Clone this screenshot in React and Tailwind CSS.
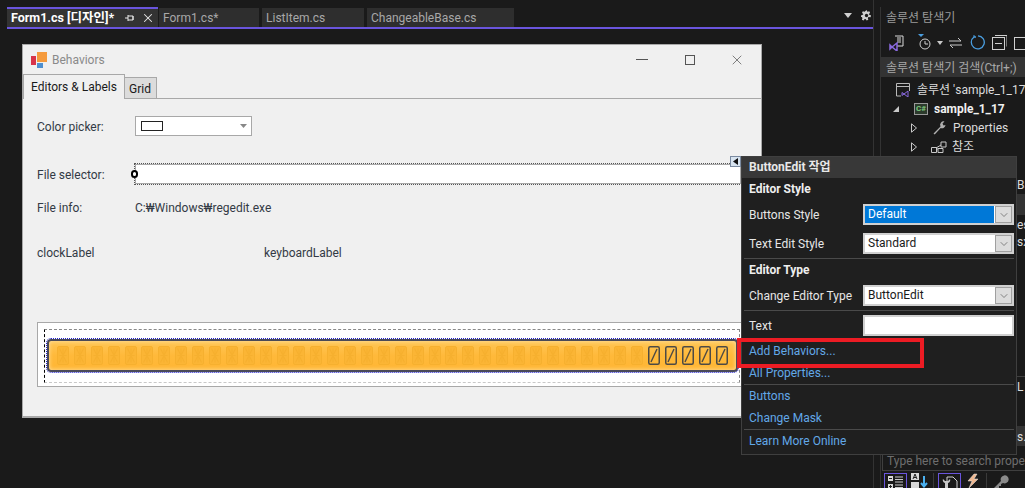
import { ChevronDown, X } from 'lucide-react';

const DocTab = ({ label, width }) => (
  <div className={`${width} h-[19px] mr-[3px] bg-[#2e2e2e] text-[#a8a8a8] text-[12px] leading-[20px] pl-[4px]`}>{label}</div>
);

const Combo = ({ value, selected }) => (
  <div className="w-[151px] h-[21px] bg-white border-2 border-[#d0d0d0] flex items-center">
    <div className={`flex-1 h-full pl-[3px] text-[12px] leading-[16px] ${selected ? 'bg-[#0078d7] text-white' : 'text-[#1a1a1a]'}`}>{value}</div>
    <div className="w-[17px] h-full ml-[1px] bg-[#dcdcdc] border border-[#a0a0a0] flex items-center justify-center">
      <ChevronDown size={12} strokeWidth={1.2} className="text-[#444]" />
    </div>
  </div>
);

const Divider = () => <div className="h-px mx-[2px] bg-[#4a4a4a] w-[270px]" />;

const FieldRow = ({ label, children }) => (
  <div className="h-[29px] flex items-center justify-between pl-[7px] pr-[2px] w-[274px] text-[12px] text-[#e6e6e6]">
    <span>{label}</span>
    {children}
  </div>
);

const Section = ({ label }) => (
  <div className="h-[22px] pl-[7px] text-[12px] leading-[22px] font-bold text-[#eeeeee]">{label}</div>
);

const LinkRow = ({ label }) => (
  <div className="h-[22px] pl-[7px] text-[12px] leading-[22px] text-[#62a8e8]">{label}</div>
);

// 14 segment cell of the LCD, dim when unlit
const DimCell = () => (
  <svg width="12" height="19" viewBox="0 0 12 19" className="shrink-0">
    <rect x="0.5" y="0.5" width="11" height="18" rx="1.5" fill="#fbb535" stroke="#f6b02f" />
    <path d="M2.500 2.500l7 14M9.500 2.500l-7 14M6 2.500v14M2.500 9.500h7" stroke="#f6b02f" strokeWidth="1.100" />
  </svg>
);

const DarkCell = () => (
  <svg width="12" height="19" viewBox="0 0 12 19" className="shrink-0">
    <rect x="0.75" y="0.75" width="10.5" height="17.5" rx="1.5" fill="none" stroke="#4d4a45" strokeWidth="1.5" />
    <path d="M9 3L3 16" stroke="#4d4a45" strokeWidth="1.400" />
  </svg>
);

const TreeRow = ({ pad, children, className = '' }) => (
  <div className={`h-[19px] flex items-center whitespace-nowrap text-[12px] text-[#dcdcdc] ${pad} ${className}`}>{children}</div>
);

const Expander = () => (
  <svg width="6" height="10" viewBox="0 0 6 10"><path d="M.5.8l5 4.200-5 4.200z" fill="none" stroke="#c8c8c8" /></svg>
);

const App = () => {
  return (
    <div
      className="relative w-[1025px] h-[488px] overflow-hidden bg-[#1a1a1a] flex"
      style={{ fontFamily: 'Roboto, "Noto Sans CJK KR", sans-serif' }}
    >
      {/* Document area */}
      <div className="w-[874px] h-full pl-[7px] flex flex-col border-r border-[#333333] shrink-0">
        <div className="h-[22px] mt-[7px] flex items-start relative">
          <div className="w-[151px] h-[20px] mr-px border-t-2 border-[#6a55dd] bg-[#333333] flex items-center pl-[4px] text-[12.5px] font-bold text-white">
            <span className="whitespace-nowrap w-[113px]">Form1.cs [디자인]*</span>
            <svg width="10" height="10" viewBox="0 0 10 10" className="ml-px shrink-0">
              <path d="M0 5h3M3 2v6M3 3h5v4H3M8 3v4" fill="none" stroke="#e8e8e8" />
            </svg>
            <X size={14} strokeWidth={1.8} className="ml-[6px] text-[#e8e8e8] shrink-0" />
          </div>
          <div className="mt-px flex">
            <DocTab label="Form1.cs*" width="w-[100px]" />
            <DocTab label="ListItem.cs" width="w-[102px]" />
            <DocTab label="ChangeableBase.cs" width="w-[147px]" />
          </div>
          <div className="ml-auto flex items-center gap-[9px] mt-[3px] pr-[1px]">
            <svg width="8" height="5" viewBox="0 0 8 5"><path d="M0 0h8L4 5z" fill="#d0d0d0" /></svg>
            <svg width="11" height="11" viewBox="0 0 12 12">
              <path d="M6 0l1 2 2-.6.9 1.700-1.400 1.400.1.500 2.400 1-.6 1.800-2.200-.2-.8 1 .6 2-1.800.8-1.200-1.700h-1l-1.200 1.700-1.800-.8.6-2-.8-1-2.200.2L0 6l2.400-1 .1-.5L1.100 3.100 2 1.400l2 .6z" fill="#d0d0d0" />
              <circle cx="6" cy="6" r="1.800" fill="#1a1a1a" />
            </svg>
          </div>
          <div className="absolute left-0 right-0 top-[20px] h-[2px] bg-[#6a55dd]" />
        </div>

        {/* Designer surface with the form */}
        <div className="pl-[15px] pt-[15px]">
          <div className="w-[740px] h-[374px] bg-[#f0f0f0] border border-b-2 border-[#a8a8a8] flex flex-col">
            <div className="h-[29px] flex items-center pl-[8px] shrink-0">
              <svg width="16" height="16" viewBox="0 0 16 16" className="mr-[5px]">
                <rect x="0" y="4" width="5" height="9" fill="#d7344a" />
                <rect x="6" y="0" width="10" height="10" fill="#f59a3c" />
                <rect x="6" y="11" width="6" height="5" fill="#4f8fce" />
              </svg>
              <span className="text-[12px] leading-[18px] pt-px text-[#8a8a8a]">Behaviors</span>
              <div className="ml-auto flex items-center pr-[16px]">
                <div className="w-[12px] h-px bg-[#555]" />
                <div className="w-[10px] h-[10px] ml-[37px] border border-[#555]" />
                <X size={16} strokeWidth={1} className="ml-[34px] text-[#444]" />
              </div>
            </div>

            {/* Tabs */}
            <div className="h-[25px] flex items-end relative shrink-0">
              <div className="w-[102px] h-[25px] border border-b-0 border-[#a8a8a8] bg-[#f0f0f0] z-10 text-[12px] leading-[25px] pl-[7px] text-[#1a1a1a]">Editors &amp; Labels</div>
              <div className="w-[32px] h-[22px] border-r border-t border-[#a8a8a8] bg-[#dcdcdc] text-[12px] leading-[22px] pl-[4px] text-[#1a1a1a]">Grid</div>
              <div className="absolute left-0 right-0 bottom-0 h-px bg-[#a8a8a8]" />
            </div>

            <div className="flex-1 pl-[14px] text-[12px] text-[#333a45]">
              <div className="flex items-center h-[20px] mt-[17px]">
                <span className="w-[98px] pt-px">Color picker:</span>
                <div className="w-[117px] h-[20px] bg-white border border-[#a8a8a8] flex items-center pl-[5px]">
                  <div className="w-[22px] h-[10px] border border-[#222]" />
                  <svg width="7" height="4" viewBox="0 0 7 4" className="ml-auto mr-[4px]"><path d="M0 0h7L3.500 4z" fill="#888" /></svg>
                </div>
              </div>
              <div className="flex items-center h-[20px] mt-[28px]">
                <span className="w-[98px] pt-px">File selector:</span>
                <div className="relative w-[606px] h-[20px] bg-white border border-[#a8a8a8] outline-1 outline-dotted outline-[#555]">
                  <div className="absolute -left-[5px] top-[5px] w-[7px] h-[8px] rounded-full bg-white border-2 border-black" />
                </div>
              </div>
              <div className="flex items-center h-[20px] mt-[13px] pt-px">
                <span className="w-[98px]">File info:</span>
                <span>C:₩Windows₩regedit.exe</span>
              </div>
              <div className="flex items-center h-[20px] mt-[26px]">
                <span className="w-[227px]">clockLabel</span>
                <span>keyboardLabel</span>
              </div>

              {/* Panel with the LCD */}
              <div className="w-[710px] h-[65px] mt-[59px] bg-white border border-[#a8a8a8] pl-[6px] pt-[6px]">
                <div className="w-[696px] h-[54px] border border-dashed border-t-[#888888] border-l-black border-r-[#888888] border-b-[#c8c8c8] pl-[2px] pt-[9px]">
                  <div className="w-[691px] h-[33px] rounded-[4px] border-2 border-[#4a4a58] bg-gradient-to-b from-[#ffc655] via-[#ffb93a] to-[#ffb634] shadow-[inset_0_0_4px_#ffe2a8] outline-1 outline-dotted outline-[#2222cc] flex items-center gap-[4.9px] pl-[8px]">
                    {[...Array(35)].map((_, i) => <DimCell key={i} />)}
                    {[...Array(5)].map((_, i) => <DarkCell key={i} />)}
                  </div>
                </div>
              </div>
            </div>
          </div>
        </div>
      </div>

      {/* Solution explorer */}
      <div className="w-[145px] ml-[6px] h-full mt-[7px] border-l border-[#333333] shrink-0 flex flex-col">
        <div className="h-[21px] pl-[5px] pt-px text-[12px] leading-[21px] text-[#9a9a9a] whitespace-nowrap">솔루션 탐색기</div>
        <div className="h-[29px] flex items-center pl-[8px]">
          <svg width="15" height="16" viewBox="0 0 15 16" className="shrink-0">
            <path d="M6 1h8v10H8M8 3h4M8 5h4M8 7h4" fill="none" stroke="#d8d8d8" />
            <path d="M1 10l2 2 5-4v8l-5-4-2 2z" fill="none" stroke="#8a6ae0" strokeWidth="1.500" />
          </svg>
          <div className="w-px h-[20px] bg-[#3a3a3a] ml-[6px]" />
          <svg width="14" height="18" viewBox="0 0 14 18" className="ml-[8px] shrink-0">
            <path d="M0 0h6L3 3z" fill="#4a9ee0" />
            <circle cx="7" cy="10" r="5" fill="none" stroke="#d0d0d0" />
            <path d="M7 7v3h3" fill="none" stroke="#d0d0d0" />
          </svg>
          <svg width="6" height="4" viewBox="0 0 6 4" className="ml-[5px] shrink-0"><path d="M0 0h6L3 4z" fill="#c8c8c8" /></svg>
          <svg width="13" height="10" viewBox="0 0 13 10" className="ml-[6px] shrink-0">
            <path d="M0 3h12M9 0l3 3M13 7H1M4 10L1 7" fill="none" stroke="#c8c8c8" />
          </svg>
          <svg width="15" height="15" viewBox="0 0 15 15" className="ml-[8px] shrink-0">
            <path d="M4 2a6.500 6.500 0 1 0 4-1.200M4 2V.2M4 2H6" fill="none" stroke="#4a9ee0" strokeWidth="1.300" />
          </svg>
          <svg width="15" height="15" viewBox="0 0 15 15" className="ml-[7px] shrink-0">
            <rect x="0.500" y="2.500" width="12" height="12" fill="none" stroke="#d0d0d0" />
            <path d="M3 8.500h7M3 .5h12v11" fill="none" stroke="#d0d0d0" />
          </svg>
          <svg width="15" height="15" viewBox="0 0 15 15" className="ml-[7px] shrink-0">
            <rect x="0.500" y="2.500" width="12" height="12" fill="none" stroke="#d0d0d0" />
          </svg>
        </div>
        <div className="h-[20px] bg-[#333333] pl-[5px] pt-px text-[12px] leading-[20px] text-[#a8a8a8] whitespace-nowrap overflow-hidden">솔루션 탐색기 검색(Ctrl+;)</div>

        <div className="pt-[3px] flex-1">
          <TreeRow pad="pl-[15px]">
            <svg width="14" height="14" viewBox="0 0 14 14" className="mr-[7px] shrink-0">
              <path d="M5 13H.5V.5h13V8M.5 3.500h13" fill="none" stroke="#b8b8b8" />
              <path d="M6 9.500l2 1.500 4-3v6l-4-3-2 1.500z" fill="none" stroke="#8a6ae0" />
            </svg>
            솔루션 'sample_1_17
          </TreeRow>
          <TreeRow pad="pl-[12px]">
            <svg width="6" height="6" viewBox="0 0 6 6" className="mr-[15px] shrink-0"><path d="M6 0v6H0z" fill="#c8c8c8" /></svg>
            <div className="w-[14px] h-[12px] mr-[6px] border border-[#999] bg-[#2c3a2c] text-[8px] leading-[10px] text-center font-bold text-[#7ec87e] shrink-0">C#</div>
            <span className="font-bold text-[#f0f0f0]">sample_1_17</span>
          </TreeRow>
          <TreeRow pad="pl-[30px]">
            <Expander />
            <svg width="15" height="15" viewBox="0 0 15 15" className="ml-[15px] mr-[6px] shrink-0">
              <path d="M1.500 13.500l7-7a3.500 3.500 0 0 1 4-5l-2 2 1 2 2-.5a3.500 3.500 0 0 1-4.800 3l-6 6.500z" fill="#b0b0b0" />
            </svg>
            Properties
          </TreeRow>
          <TreeRow pad="pl-[30px]">
            <Expander />
            <svg width="16" height="12" viewBox="0 0 16 12" className="ml-[14px] mr-[5px] shrink-0">
              <path d="M.5 6.500h5v5h-5zM10 1h5v5h-5zM7 7.500h5v4H7zM5.500 8H7M10 4L5 7" fill="none" stroke="#c8c8c8" />
            </svg>
            참조
          </TreeRow>
          <TreeRow pad="pl-[30px]" />
          <TreeRow pad="pl-[136px]">Ba</TreeRow>
          <div className="h-[21px] bg-[#333333]" />
          <TreeRow pad="pl-[136px]">es</TreeRow>
          <TreeRow pad="pl-[136px] -mt-[2px]">sx</TreeRow>
          {/* Properties pane header peeking out past the popup */}
          <div className="relative">
            <div className="h-px mt-[125px] ml-[136px] bg-[#3f3f3f]" />
            <TreeRow pad="pl-[136px] text-[#62a8e8]">L</TreeRow>
            <div className="h-[20px] mt-[30px] bg-[#333333] pl-[136px] text-[12px] leading-[22px] text-[#dcdcdc]">s.:</div>
          </div>
        </div>
      </div>

      {/* Property search and toolbar under the popup */}
      <div className="absolute left-[881px] top-[453px] w-[144px] h-[35px]">
        <div className="h-[18px] ml-px border-l border-b border-[#3f3f3f] text-[12px] leading-[16px] pl-[4px] text-[#6e6e6e] whitespace-nowrap overflow-hidden">Type here to search properties</div>
        <div className="flex items-start pt-[2px] pl-[3px] gap-[4px]">
          <div className="w-[23px] h-[20px] border border-[#6a55dd] pt-[2px] pl-[3px]">
            <svg width="16" height="14" viewBox="0 0 16 14">
              <path d="M0 0h5v5H0zM0 8h5v5H0z" fill="#d8d8d8" />
              <path d="M1 2.500h3M1 10.500h3M2.500 9v3" stroke="#1f1f1f" />
              <path d="M7 1h8M7 3.500h8M7 6h8M7 9h8M7 11.500h8" stroke="#c8c8c8" />
            </svg>
          </div>
          <svg width="18" height="15" viewBox="0 0 18 15" className="shrink-0">
            <path d="M0 0h8v7H0z" fill="#d8d8d8" />
            <path d="M2 6l2-5 2 5M3 4.500h2" fill="none" stroke="#1f1f1f" />
            <path d="M0 9h8v6H0z" fill="#d8d8d8" />
            <path d="M13 3v10M10 10l3 3.500 3-3.500" fill="none" stroke="#4ab0f0" strokeWidth="2" />
          </svg>
          <div className="w-px h-[16px] bg-[#3a3a3a]" />
          <div className="w-[23px] h-[20px] border border-[#6a55dd] flex items-center justify-center">
            <svg width="16" height="15" viewBox="0 0 16 15">
              <path d="M5 1h6l4 4v9H5z" fill="none" stroke="#d0d0d0" />
              <path d="M1 3a3 3 0 0 0 2 4v7h3V7a3 3 0 0 0 2-4L6 5H3z" fill="#c8c8c8" />
            </svg>
          </div>
          <svg width="15" height="15" viewBox="0 0 15 15"><path d="M9 1L3 8h4l-3 7 9-9H9l3-5z" fill="#f0b890" stroke="#e8e8e8" strokeWidth=".5" /></svg>
          <div className="w-px h-[16px] bg-[#3a3a3a] ml-[2px]" />
          <svg width="16" height="16" viewBox="0 0 16 16" className="ml-[2px]"><path d="M1 15l7-7a4 4 0 1 1 2 2l-2 1v2H6v2z" fill="#8a8a8a" /></svg>
        </div>
      </div>

      {/* Smart tag popup */}
      <div className="absolute left-[730px] top-[156px] w-[11px] h-[11px] bg-[#d8e4f0] border border-[#7a8aa0] flex items-center justify-center">
        <svg width="5" height="7" viewBox="0 0 5 7"><path d="M5 0v7L0 3.500z" fill="#111" /></svg>
      </div>
      <div className="absolute left-[741px] top-[156px] w-[276px] h-[299px] bg-[#1f1f1f] border border-[#3f3f3f]">
        <div className="h-[21px] bg-[#383838] pl-[7px] text-[12px] leading-[20px] font-bold text-[#e8e8e8]">ButtonEdit 작업</div>
        <Section label="Editor Style" />
        <FieldRow label="Buttons Style"><Combo value="Default" selected /></FieldRow>
        <FieldRow label="Text Edit Style"><Combo value="Standard" /></FieldRow>
        <Divider />
        <Section label="Editor Type" />
        <FieldRow label="Change Editor Type"><Combo value="ButtonEdit" /></FieldRow>
        <Divider />
        <FieldRow label="Text"><div className="w-[151px] h-[21px] bg-white border-2 border-[#d0d0d0]" /></FieldRow>
        <LinkRow label="Add Behaviors..." />
        <LinkRow label="All Properties..." />
        <Divider />
        <LinkRow label="Buttons" />
        <LinkRow label="Change Mask" />
        <Divider />
        <LinkRow label="Learn More Online" />
      </div>

      {/* Red callout around Add Behaviors */}
      <div className="absolute left-[737px] top-[338px] w-[187px] h-[30px] border-4 border-[#ed1c24]" />
    </div>
  );
};

export default App;
